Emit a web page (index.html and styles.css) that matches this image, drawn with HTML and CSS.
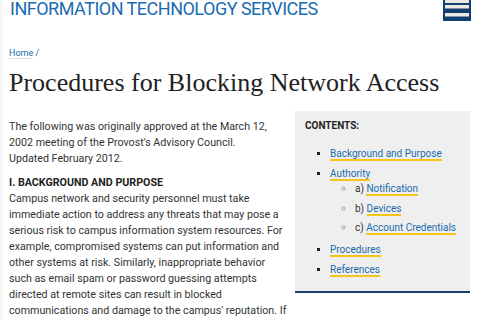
FILE: index.html
```html
<!DOCTYPE html>
<html lang="en">

<head>
    <meta charset="UTF-8">
    <meta name="viewport" content="width=device-width, initial-scale=1.0">
    <title>Procedures for Blocking Network Access - Information Technology Services</title>
    <link rel="stylesheet" href="styles.css">
</head>

<body>
    <header class="site-header">
        <a class="site-name" href="#">INFORMATION TECHNOLOGY SERVICES</a>
        <button class="menu-btn" aria-label="Menu">
            <svg width="28" height="21" viewBox="0 0 28 21">
                <rect width="28" height="21" fill="#123f6d" />
                <rect x="2" y="0" width="24" height="3" fill="#ebe9e1" />
                <rect x="2" y="5" width="24" height="3.5" fill="#ebe9e1" />
                <rect x="2" y="13" width="24" height="3.5" fill="#ebe9e1" />
            </svg>
        </button>
    </header>

    <main class="page">
        <nav class="breadcrumb"><a href="#">Home</a> /</nav>
        <h1>Procedures for Blocking Network Access</h1>

        <div class="content">
            <div class="body-text">
                <p>The following was originally approved at the March 12, 2002 meeting of the Provost's Advisory Council.<br>
                    Updated February 2012.</p>
                <p><strong id="background">I. BACKGROUND AND PURPOSE</strong><br>
                    Campus network and security personnel must take immediate action to address any threats that may pose a
                    serious risk to campus information system resources. For example, compromised systems can put information and
                    other systems at risk. Similarly, inappropriate behavior such as email spam or password guessing attempts
                    directed at remote sites can result in blocked communications and damage to the campus' reputation. If
                    these threats are not addressed promptly, the campus may lose access to network resources.</p>
            </div>

            <aside class="toc">
                <div class="toc-title">CONTENTS:</div>
                <ul>
                    <li><a href="#background">Background and Purpose</a></li>
                    <li><a href="#">Authority</a>
                        <ul>
                            <li>a) <a href="#">Notification</a></li>
                            <li>b) <a href="#">Devices</a></li>
                            <li>c) <a href="#">Account Credentials</a></li>
                        </ul>
                    </li>
                    <li><a href="#">Procedures</a></li>
                    <li><a href="#">References</a></li>
                </ul>
            </aside>
        </div>
    </main>
</body>

</html>
```

FILE: styles.css
```css
body {
    margin: 0;
    padding: 0;
    background: #fff;
    font-family: Roboto, "Liberation Sans", sans-serif;
    color: #333;
    box-shadow: inset 4px 0 4px -3px rgba(0, 0, 0, 0.08);
    min-height: 100vh;
}

a {
    color: #1a6cae;
    text-decoration: none;
}

.site-header {
    display: flex;
    justify-content: space-between;
    align-items: flex-start;
    height: 22px;
    padding: 0 9px 0 10px;
}

.site-name {
    font-size: 18px;
    line-height: 18px;
    letter-spacing: -0.5px;
    color: #1a6cb2;
}

.menu-btn {
    border: 0;
    padding: 0;
    margin: 0;
    background: none;
    display: flex;
}

.page {
    padding: 0 10px 0 9px;
}

.breadcrumb {
    margin-top: 25px;
    font-size: 9px;
    line-height: 12px;
    color: #555;
}

.breadcrumb a {
    border-bottom: 1px solid #ddd;
}

h1 {
    margin: 8px 0 0;
    font-family: "Liberation Serif", serif;
    font-weight: normal;
    font-size: 26px;
    line-height: 32px;
    color: #222;
}

.content {
    display: grid;
    grid-template-columns: 1fr 175px;
    gap: 8px;
    margin-top: 12px;
}

.body-text p {
    margin: 8px 0 8px;
    font-size: 10.7px;
    line-height: 16px;
}

.body-text strong {
    color: #222;
}

.toc {
    align-self: start;
    background: #efefef;
    border-bottom: 2px solid #1b3f6b;
    padding: 8px 6px 8px 10px;
}

.toc-title {
    font-size: 10px;
    line-height: 14px;
    font-weight: bold;
    color: #222;
}

.toc ul {
    margin: 14px 0 0;
    padding-left: 25px;
    list-style: square;
    font-size: 10px;
    line-height: 14px;
}

.toc li {
    margin-bottom: 6px;
}

.toc li::marker {
    color: #222;
}

.toc li a {
    border-bottom: 2px solid #f5c419;
}

.toc ul ul {
    margin: 1px 0 8px;
    padding: 0 0 0 25px;
    list-style: circle;
}

.toc ul ul li {
    margin-bottom: 5.5px;
}

.toc ul ul li::marker {
    color: #999;
}
```
